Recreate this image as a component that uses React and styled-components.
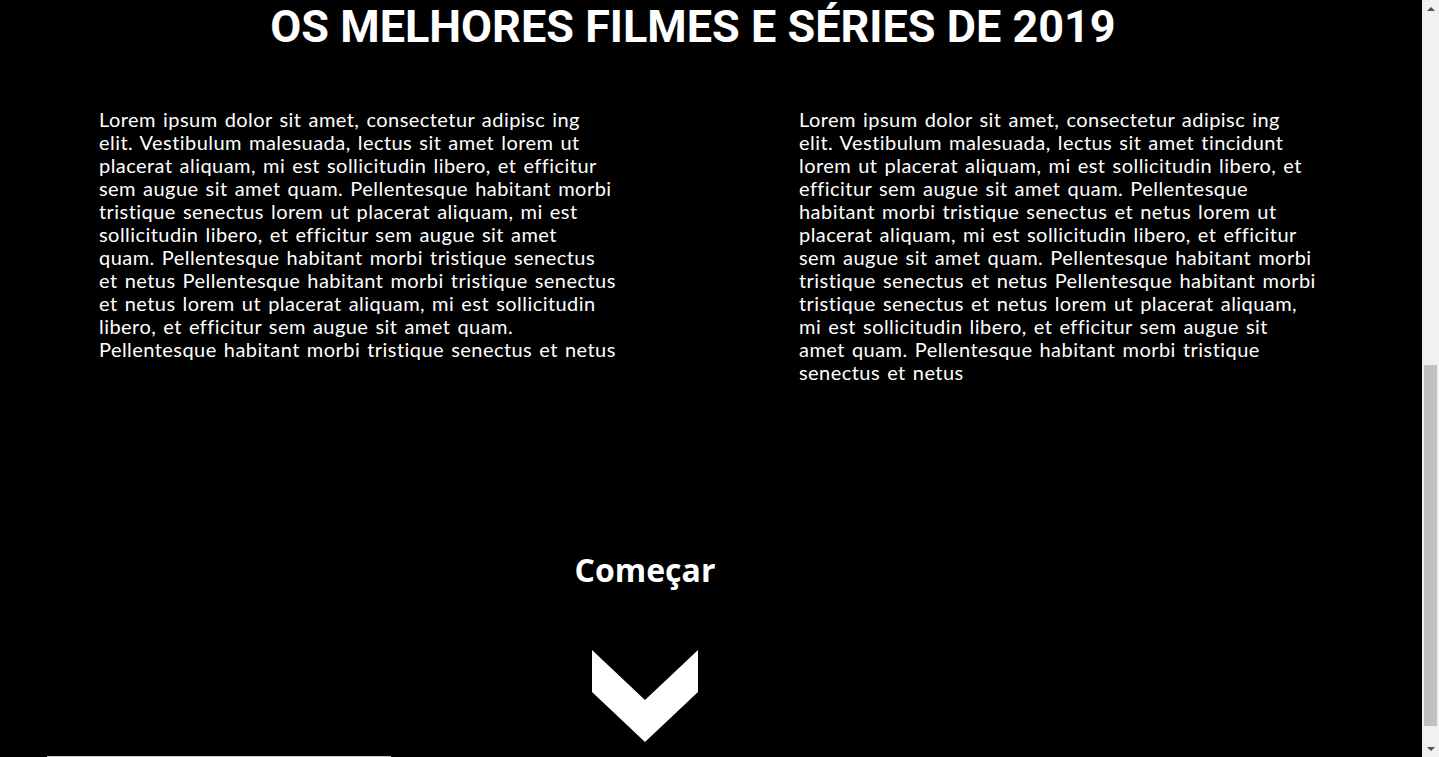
import { useLayoutEffect } from "react"
import styled, { createGlobalStyle } from "styled-components"

const GlobalStyle = createGlobalStyle`
  body {
    margin: 0;
    background-color: #000;
    color: #fff;
  }
`

const Hero = styled.section`
  height: 732px;
  background-color: #000;
`

const Section = styled.section`
  display: flex;
  flex-direction: column;
  background-color: #000;
`

const Title = styled.h1`
  margin: 0;
  padding-right: 53px;
  text-align: center;
  font-family: Roboto, "Liberation Sans", sans-serif;
  font-weight: 700;
  font-size: 45px;
  line-height: 54px;
  color: #fff;
`

const Columns = styled.div`
  display: grid;
  grid-template-columns: 518px 519px;
  column-gap: 182px;
  padding: 54px 0 0 99px;
  height: 442px;
`

const Text = styled.p`
  margin: 0;
  font-family: Lato, "Open Sans", sans-serif;
  font-size: 20px;
  letter-spacing: 0.45px;
  word-spacing: 1.5px;
  line-height: 23px;
  color: #fff;
`

const Start = styled.div`
  display: flex;
  flex-direction: column;
  align-items: center;
  width: 1290px;
`

const StartLabel = styled.h2`
  margin: 0;
  font-family: "Open Sans", "DejaVu Sans", sans-serif;
  font-weight: 700;
  font-size: 32px;
  line-height: 40px;
  color: #fff;
`

const Arrow = styled.svg`
  display: block;
  margin-top: 60px;
`

const Footer = styled.div`
  margin: 14px 0 0 47px;
  width: 344px;
  height: 32px;
  background-color: #c8c8c8;
`

// drawn scrollbar, the headless window hides the real one
const ScrollTrack = styled.div`
  position: fixed;
  top: 0;
  right: 0;
  width: 17px;
  height: 100vh;
  display: flex;
  flex-direction: column;
  background-color: #f1f1f1;
`

const ScrollButton = styled.div`
  display: flex;
  align-items: center;
  justify-content: center;
  height: 17px;
  flex: none;
`

const ScrollSpace = styled.div`
  flex: 1;
  display: flex;
  flex-direction: column;
  padding: 348px 2px 14px;
`

const ScrollThumb = styled.div`
  flex: 1;
  background-color: #c1c1c1;
`

const Triangle = styled.div`
  width: 0;
  height: 0;
  border-left: 4px solid transparent;
  border-right: 4px solid transparent;
  ${(props) =>
    props.up
      ? "border-bottom: 4px solid #505050;"
      : "border-top: 4px solid #505050;"}
`

const left =
  "Lorem ipsum dolor sit amet, consectetur adipisc ing elit. Vestibulum malesuada, lectus sit amet lorem ut placerat aliquam, mi est sollicitudin libero, et efficitur sem augue sit amet quam. Pellentesque habitant morbi tristique senectus lorem ut placerat aliquam, mi est sollicitudin libero, et efficitur sem augue sit amet quam. Pellentesque habitant morbi tristique senectus et netus Pellentesque habitant morbi tristique senectus et netus lorem ut placerat aliquam, mi est sollicitudin libero, et efficitur sem augue sit amet quam. Pellentesque habitant morbi tristique senectus et netus"

const right =
  "Lorem ipsum dolor sit amet, consectetur adipisc ing elit. Vestibulum malesuada, lectus sit amet tincidunt lorem ut placerat aliquam, mi est sollicitudin libero, et efficitur sem augue sit amet quam. Pellentesque habitant morbi tristique senectus et netus lorem ut placerat aliquam, mi est sollicitudin libero, et efficitur sem augue sit amet quam. Pellentesque habitant morbi tristique senectus et netus Pellentesque habitant morbi tristique senectus et netus lorem ut placerat aliquam, mi est sollicitudin libero, et efficitur sem augue sit amet quam. Pellentesque habitant morbi tristique senectus et netus"

const App = () => {
  useLayoutEffect(() => {
    window.scrollTo(0, 732)
  }, [])

  return (
    <>
      <GlobalStyle />
      <Hero />
      <Section>
        <Title>OS MELHORES FILMES E SÉRIES DE 2019</Title>
        <Columns>
          <Text>{left}</Text>
          <Text>{right}</Text>
        </Columns>
        <Start>
          <StartLabel>Começar</StartLabel>
          <Arrow width="106" height="92" viewBox="0 0 106 92">
            <polygon points="0,0 53,50 106,0 106,42 53,92 0,42" fill="#fff" />
          </Arrow>
        </Start>
      </Section>
      <Footer />
      <ScrollTrack>
        <ScrollButton>
          <Triangle up />
        </ScrollButton>
        <ScrollSpace>
          <ScrollThumb />
        </ScrollSpace>
        <ScrollButton>
          <Triangle />
        </ScrollButton>
      </ScrollTrack>
    </>
  )
}

export default App
